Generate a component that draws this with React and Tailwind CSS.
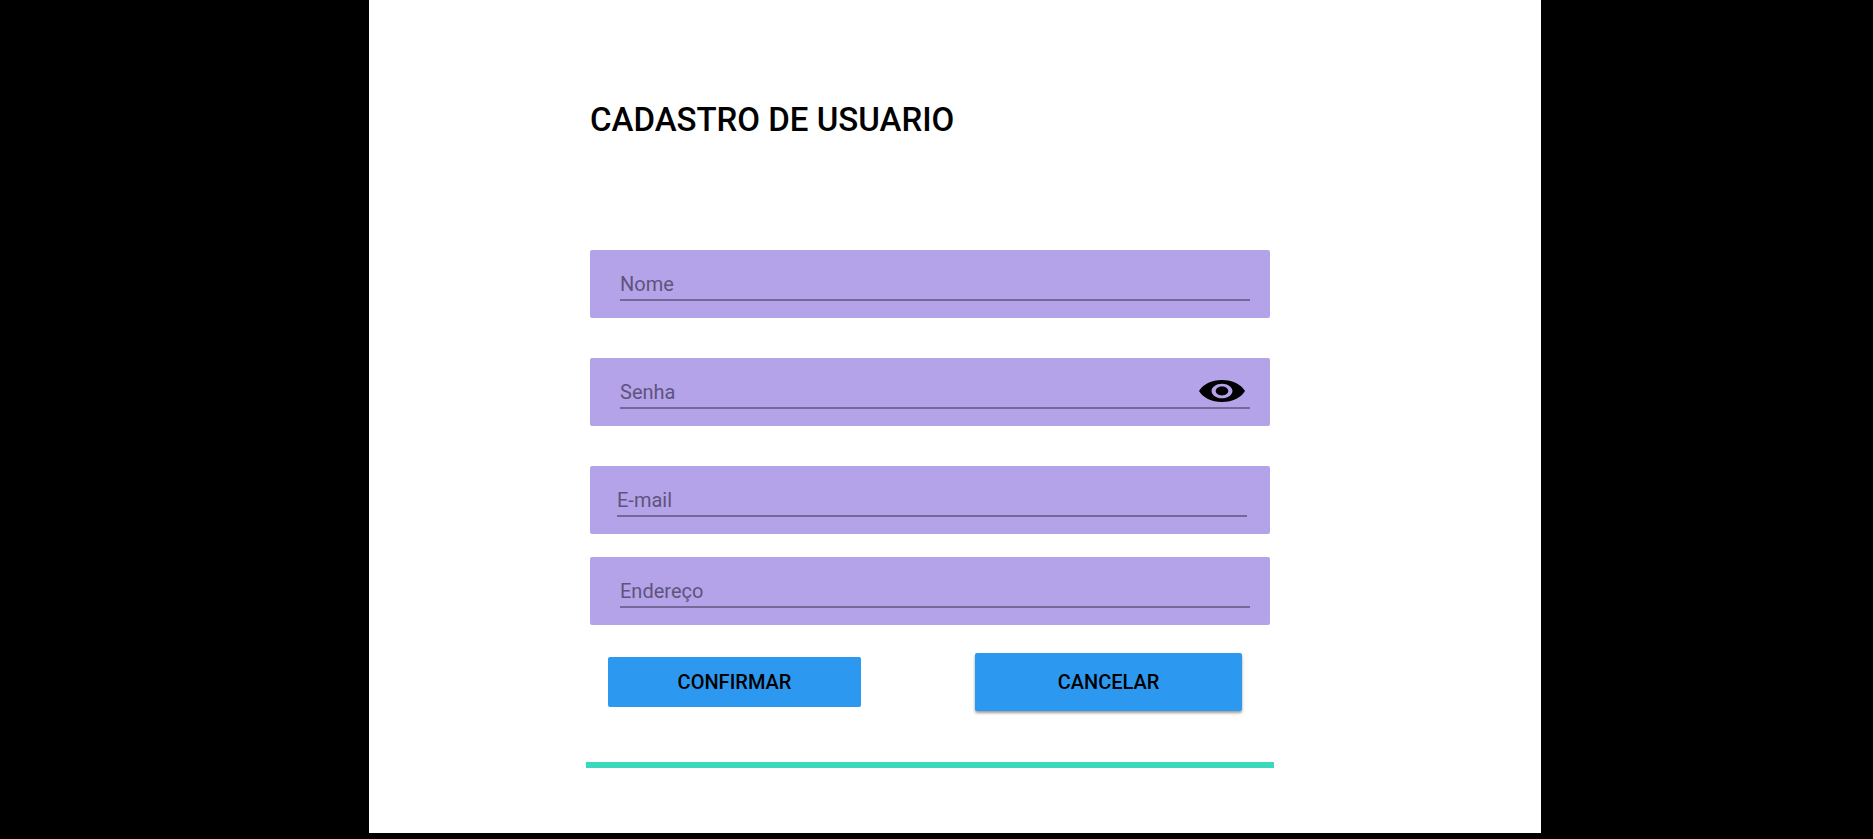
import { useState } from "react";

function Field({ id, label, type = "text", inset = "pl-[30px] pr-5", children }) {
  return (
    <div className={`h-[68px] rounded-[2px] bg-[#b4a3e8] ${inset}`}>
      <div className="relative">
        <input
          id={id}
          name={id}
          type={type}
          aria-label={label}
          placeholder={label}
          className="block h-[51px] w-full border-b-2 border-[#75699a] bg-transparent pt-[18px] text-xl text-black outline-none placeholder:text-[#5f547c]"
        />
        {children}
      </div>
    </div>
  );
}

function EyeIcon() {
  return (
    <svg viewBox="1 4.5 22 15" preserveAspectRatio="none" className="h-[22px] w-[46px]" fill="#000" aria-hidden="true">
      <path d="M12 4.5C7 4.5 2.73 7.61 1 12c1.73 4.39 6 7.5 11 7.5s9.27-3.11 11-7.5c-1.73-4.39-6-7.5-11-7.5zM12 17c-2.76 0-5-2.24-5-5s2.24-5 5-5 5 2.24 5 5-2.24 5-5 5zm0-8c-1.66 0-3 1.34-3 3s1.34 3 3 3 3-1.34 3-3-1.34-3-3-3z" />
    </svg>
  );
}

export default function App() {
  const [visible, setVisible] = useState(false);

  return (
    <div className="grid min-h-screen grid-cols-[369fr_1172fr_332fr] bg-black pb-[6px] font-[Roboto,sans-serif] text-black">
      <main className="col-start-2 grid grid-cols-[217fr_688fr_267fr] content-start bg-white">
        <form className="col-start-2 pt-[100px] pb-16" onSubmit={(e) => e.preventDefault()}>
          <div className="px-1">
            <h1 className="mb-[110px] text-[33px] leading-10 font-medium whitespace-nowrap">CADASTRO DE USUARIO</h1>
            <div className="flex flex-col gap-10">
              <Field id="nome" label="Nome" />
              <Field id="senha" label="Senha" type={visible ? "text" : "password"}>
                <button
                  type="button"
                  aria-label="Mostrar senha"
                  onClick={() => setVisible(!visible)}
                  className="absolute right-[5px] bottom-[7px]"
                >
                  <EyeIcon />
                </button>
              </Field>
              <Field id="email" label="E-mail" type="email" inset="pl-[27px] pr-[23px]" />
            </div>
            <div className="mt-[23px]">
              <Field id="endereco" label="Endereço" />
            </div>
          </div>
          <div className="mt-7 flex items-center justify-between pr-8 pl-[22px] text-xl font-medium">
            <button type="submit" className="h-[50px] w-[253px] rounded-[2px] bg-[#2c98f0]">
              CONFIRMAR
            </button>
            <button
              type="button"
              className="h-[58px] w-[267px] rounded-[2px] bg-[#2c98f0] shadow-[0_2px_3px_rgba(0,0,0,0.4)]"
            >
              CANCELAR
            </button>
          </div>
          <hr className="mt-[51px] h-[6px] border-0 bg-[#3cd8bc]" />
        </form>
      </main>
    </div>
  );
}
